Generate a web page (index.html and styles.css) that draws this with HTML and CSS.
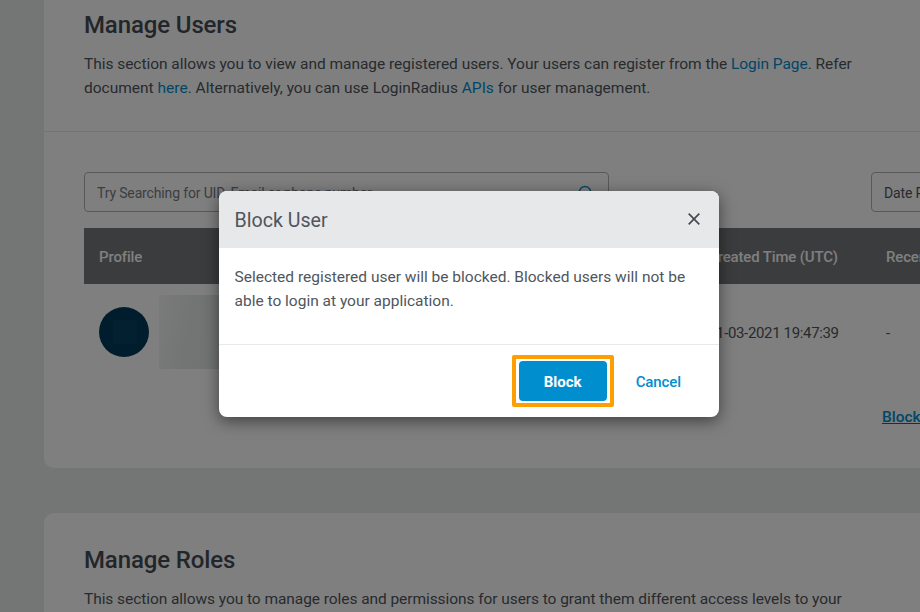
FILE: index.html
```html
<!DOCTYPE html>
<html lang="en">
<head>
<meta charset="utf-8">
<title>Manage Users</title>
<link rel="stylesheet" href="styles.css">
</head>
<body>
<main class="page">
  <section class="card users">
    <header class="card-head">
      <h2>Manage Users</h2>
      <p>This section allows you to view and manage registered users. Your users can register from the <a>Login Page</a>. Refer<br><span class="loose">document <a>here</a>. Alternatively, you can use LoginRadius <a>APIs</a> for user management.</span></p>
    </header>
    <div class="card-body">
      <div class="filters">
        <div class="search"><span>Try Searching for UID, Email or phone number</span>
          <svg width="16" height="16" viewBox="0 0 16 16" fill="none" stroke="#0a8cd0" stroke-width="1.4"><circle cx="7" cy="7" r="5.5"/><path d="M11 11l4 4"/></svg>
        </div>
        <div class="date">Date Range</div>
      </div>
      <div class="row thead"><span class="c1">Profile</span><span class="c2">Created Time (UTC)</span><span>Recent Login</span></div>
      <div class="row trow">
        <div class="c1 profile"><span class="avatar"><i></i></span><span class="redacted"></span></div>
        <span class="c2 time">21-03-2021 19:47:39</span><span class="recent">-</span>
      </div>
      <div class="actions"><a>Block</a></div>
    </div>
  </section>
  <section class="card roles">
    <h2>Manage Roles</h2>
    <p class="tight">This section allows you to manage roles and permissions for users to grant them different access levels to your</p>
  </section>
</main>
<div class="overlay">
  <div class="modal" role="dialog">
    <div class="modal-head"><span>Block User</span>
      <svg width="12" height="12" viewBox="0 0 12 12" fill="none" stroke="#444b52" stroke-width="1.7"><path d="M.7.7l10.6 10.6M11.3.7L.7 11.3"/></svg>
    </div>
    <div class="modal-body">Selected registered user will be blocked. Blocked users will not be<br>able to login at your application.</div>
    <div class="modal-foot">
      <div class="ring"><button class="block">Block</button></div>
      <button class="cancel">Cancel</button>
    </div>
  </div>
</div>
</body>
</html>
```
FILE: styles.css
```css
* { box-sizing: border-box; }
body { margin: 0; width: 920px; height: 612px; overflow: hidden; background: #e8ecea; font: 15.5px/24px Roboto, sans-serif; color: #50565d; }
a { color: #008ecf; }
.page { width: 920px; height: 612px; overflow: hidden; padding-left: 44px; }
.card { width: 1256px; background: #fff; }
.users { height: 468px; border-radius: 0 0 10px 10px; }
.card-head { height: 132px; padding: 9px 40px 0; border-bottom: 1px solid #e7e8ea; }
h2 { margin: 0; font-size: 24px; line-height: 33px; font-weight: 500; letter-spacing: -.12px; color: #454c54; }
p { margin: 10px 0 0; white-space: nowrap; letter-spacing: -.035px; }
.loose { letter-spacing: 0; }
.tight { letter-spacing: -.065px; }
.card-body { padding: 40px 40px 0; }
.filters { display: flex; justify-content: space-between; width: 920px; margin-bottom: 16px; font-size: 14px; letter-spacing: -.15px; }
.search, .date { display: flex; align-items: center; height: 40px; border: 1px solid #b0b2b5; border-radius: 4px; padding: 2px 12px 0; }
.search { width: 525px; justify-content: space-between; color: #777c82; padding-right: 14px; }
.date { width: 133px; }
.row { display: flex; align-items: center; padding-left: 15px; white-space: nowrap; }
.c1 { width: 609px; }
.c2 { width: 178px; }
.thead { height: 56px; padding-top: 1px; background: #76787b; color: #fff; font-size: 15px; font-weight: 500; letter-spacing: -.15px; }
.trow { height: 96px; font-size: 15px; }
.time { letter-spacing: -.35px; }
.time, .recent { padding-top: 2px; }
.profile { display: flex; align-items: center; gap: 10px; }
.avatar { display: grid; place-items: center; width: 50px; height: 50px; border-radius: 50%; background: #003a5d; }
.avatar i { width: 24px; height: 24px; margin-left: 2px; background: #064061; }
.redacted { width: 80px; height: 74px; background: linear-gradient(100deg, #f5f6f6, #e6e8e8 40%, #e2e4e4); }
.actions { padding: 25px 0 0 798px; font-weight: 500; text-decoration: underline; }
.roles { margin-top: 45px; height: 200px; padding: 31px 40px 0; border-radius: 10px; }
.overlay { position: absolute; inset: 0; background: rgba(0,0,0,.5); }
.modal { width: 500px; margin: 191px 0 0 219px; height: 226px; background: #fff; border-radius: 8px; box-shadow: 0 4px 16px rgba(0,0,0,.5); overflow: hidden; }
.modal-head { display: flex; align-items: center; justify-content: space-between; height: 57px; background: #e7e8ea; padding: 0 19.5px 0 15.5px; font-size: 19.6px; }
.modal-head span { padding-top: 2px; }
.modal-head svg { margin-top: -2px; }
.modal-body { height: 97px; padding: 16.5px 15.5px 0; border-bottom: 1px solid #e7e8ea; white-space: nowrap; }
.modal-foot { display: flex; align-items: center; justify-content: flex-end; height: 72px; padding-right: 38px; gap: 22px; }
.ring { border: 4px solid #ff9e00; border-radius: 2px; padding: 2px 3px; height: 52px; width: 102px; }
button { border: 0; background: none; padding: 0; font: 500 15px/42px Roboto, sans-serif; color: #008ecf; }
.cancel { padding-top: 2px; letter-spacing: -.1px; }
.block { display: block; width: 88px; height: 40px; background: #008ecf; border-radius: 4px; color: #fff; font-weight: 700; }
```
